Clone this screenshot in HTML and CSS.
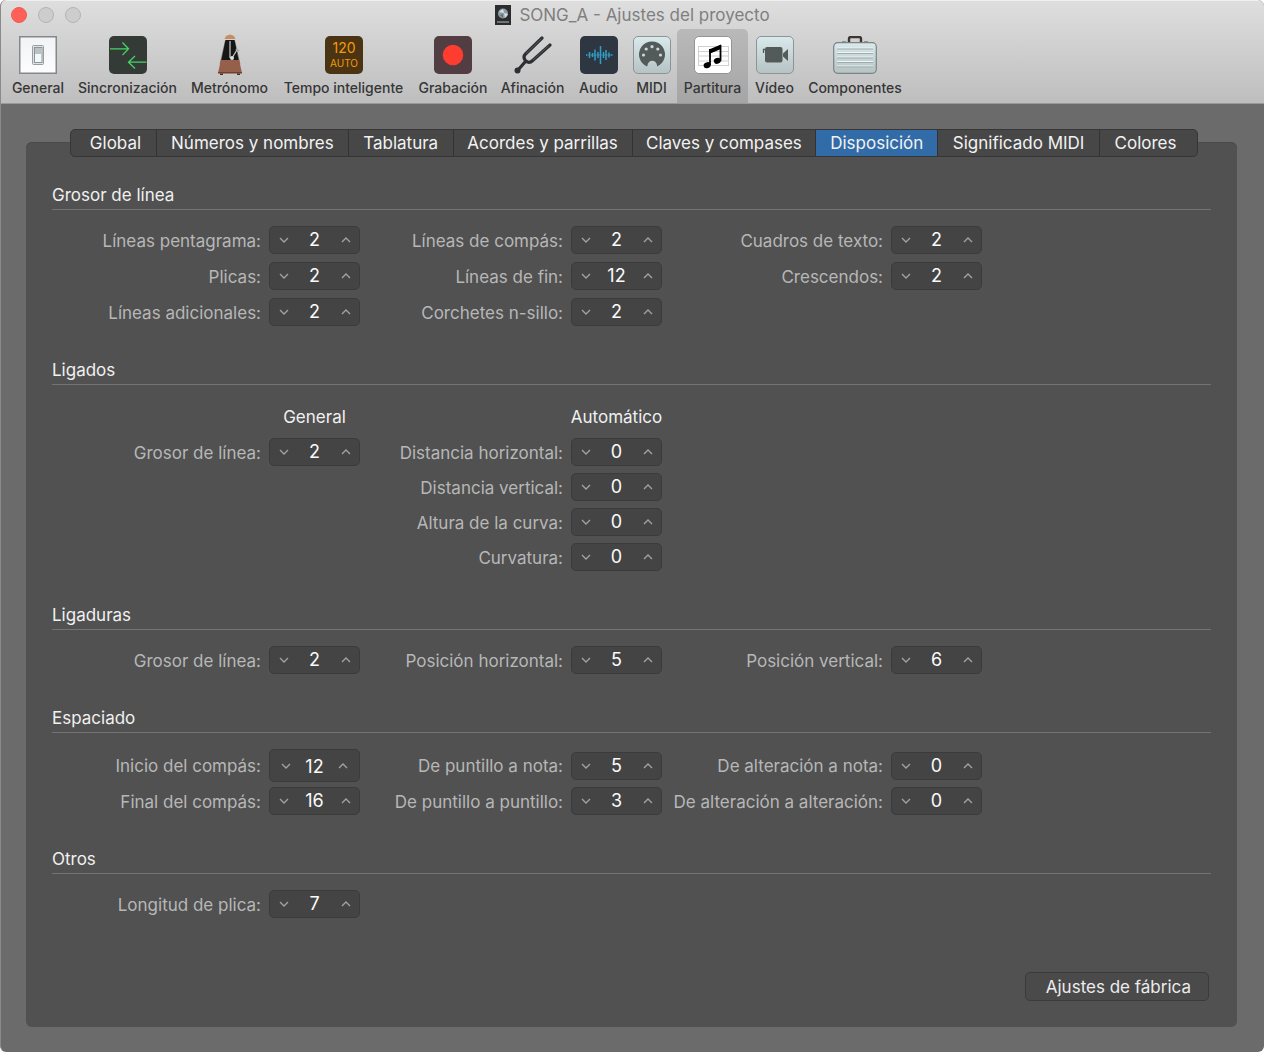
FILE: index.html
```html
<!DOCTYPE html>
<html lang="es">
<head>
<meta charset="utf-8">
<meta name="viewport" content="width=device-width, initial-scale=1">
<title>SONG_A - Ajustes del proyecto</title>
<link rel="stylesheet" href="styles.css">
</head>
<body>
<svg class="defs" aria-hidden="true">
  <symbol id="down" viewBox="0 0 10 6"><path d="M1 1l4 4 4-4"/></symbol>
  <symbol id="up" viewBox="0 0 10 6"><path d="M1 5l4-4 4 4"/></symbol>
</svg>
<div class="window">
  <header class="chrome">
    <div class="titlebar">
      <div class="lights">
        <button class="light close" aria-label="Cerrar"></button>
        <button class="light" aria-label="Minimizar"></button>
        <button class="light" aria-label="Ampliar"></button>
      </div>
      <h1 class="title">
        <svg width="16" height="20" viewBox="0 0 16 20" aria-hidden="true"><rect width="16" height="20" fill="#2b2c2e"/><circle cx="8" cy="8.500" r="5" fill="#8d9ba5"/><path d="M4 7l4-3 1 4zM9 8l4 1-3 4z" fill="#d5e0e6"/><path d="M5 10l3-1 0 4z" fill="#60707b"/><path d="M2 17h12" stroke="#bbb"/></svg>
        <span>SONG_A - Ajustes del proyecto</span>
      </h1>
    </div>
    <nav class="toolbar">
      <button class="tool"><svg width="38" height="38" viewBox="0 0 38 38"><defs><linearGradient id="g1" x2="0" y2="1"><stop stop-color="#f1f3f6"/><stop offset="1" stop-color="#fdfdfe"/></linearGradient><linearGradient id="g2" x2="0" y2="1"><stop stop-color="#d9eaec"/><stop offset="1" stop-color="#b6c2c3"/></linearGradient></defs><rect x=".75" y=".75" width="36.500" height="36.500" fill="url(#g1)" stroke="#85878a" stroke-width="1.500"/><rect x="13.500" y="9.500" width="11" height="19" rx="1" fill="#dfe2e4" stroke="#9a9da0"/><rect x="15.500" y="11.500" width="7.500" height="15" fill="#f4f8f9" stroke="#8d9497"/><rect x="16" y="12" width="6.500" height="6" fill="#b9c1c4"/></svg><span>General</span></button>
      <button class="tool"><svg width="38" height="38" viewBox="0 0 38 38"><rect width="38" height="38" rx="5" fill="#343b36"/><g fill="none" stroke="#45d364" stroke-width="1.300"><path d="M1 12.800h18.500M13.500 6.500l6 6.300-6 6.300M37.500 26.200H19.500M26 20l-6.500 6.200 6.500 6.300"/></g></svg><span>Sincronización</span></button>
      <button class="tool"><svg width="38" height="42" viewBox="0 0 38 42" class="metronome"><path d="M14 6.500h10l5.500 24h-21z" fill="#7d7a72"/><path d="M14.500 6h9l4.500 22h-18z" fill="#161616"/><path d="M13.500 5l1.500-3 4-1.500L23 2l1.500 3z" fill="#c98c62"/><path d="M10 26h18l3 13H7z" fill="#965f49"/><path d="M7 38h24v1.500H7z" fill="#6e4030"/><path d="M9 39.500h3v1.500H9zM26 39.500h3v1.500h-3z" fill="#4c2e24"/><path d="M19 7v17" stroke="#a8a8a8" stroke-width="1.500"/><path d="M21 24l8-13" stroke="#ccc" stroke-width="1.200"/><circle cx="21" cy="24" r="2" fill="#ddd"/><path d="M25 15l3 2" stroke="#aaa" stroke-width="2"/></svg><span>Metrónomo</span></button>
      <button class="tool"><svg width="38" height="38" viewBox="0 0 38 38"><rect width="38" height="38" rx="5" fill="#4a3413"/><text x="19" y="17" class="tempo-number">120</text><text x="19" y="31" class="tempo-mode">AUTO</text></svg><span>Tempo inteligente</span></button>
      <button class="tool"><svg width="38" height="38" viewBox="0 0 38 38"><rect width="38" height="38" rx="5" fill="#513d42"/><circle cx="19" cy="19" r="10.300" fill="#ff3c30"/></svg><span>Grabación</span></button>
      <button class="tool"><svg width="38" height="38" viewBox="0 0 38 38"><g fill="none" stroke="#2d2f32" stroke-linecap="round" stroke-linejoin="round"><path d="M28 2L11.500 18c-2 2-2 4-.3 6.300 2.300 2.700 5 2.700 7.500.2L36 9" stroke-width="3.200"/><path d="M11 26L4 34" stroke-width="3.200"/></g><circle cx="3.500" cy="34.500" r="3" fill="#2d2f32"/><path d="M27.500 2.500L12 17.500M35 9.500L19 24" stroke="#70757a" stroke-width=".6"/></svg><span>Afinación</span></button>
      <button class="tool"><svg width="38" height="38" viewBox="0 0 38 38"><rect width="38" height="38" rx="5" fill="#2e3641"/><path d="M6 19h1M9.500 16v6M12.500 17v4M15 13.500v11M18 16v6M20.500 10v18M23.500 16v6M26 14v10M29 16.500v5M31.500 18.500v1" stroke="#309ec7" stroke-width="1.500"/><path d="M6 19h27" stroke="#309ec7" stroke-width=".7"/></svg><span>Audio</span></button>
      <button class="tool"><svg width="38" height="38" viewBox="0 0 38 38"><rect x=".5" y=".5" width="37" height="37" rx="4.500" fill="url(#g2)" stroke="#8c9495"/><path d="M14 30.500a13 13 0 1 1 10 0v-1a4.500 4.500 0 0 0-9.500 0z" fill="#535b5a"/><g fill="#cbd8d9"><circle cx="10.500" cy="19" r="1.600"/><circle cx="13.200" cy="13" r="1.600"/><circle cx="19" cy="10.700" r="1.600"/><circle cx="24.800" cy="13" r="1.600"/><circle cx="27.500" cy="19" r="1.600"/></g></svg><span>MIDI</span></button>
      <button class="tool current" aria-current="page"><svg width="38" height="38" viewBox="0 0 38 38"><rect x=".5" y=".5" width="37" height="37" rx="4.500" fill="#fff" stroke="#949494"/><path d="M4 10.500h31M4 15.500h31M4 20h31M4 25h31M4 29.500h31M4.500 10v20M34.500 10v20" stroke="#d0d0d0" fill="none"/><path d="M15 13.500l12-5v4.500l-12 5z"/><path d="M16 13v16M26.500 9v16" stroke="#000" stroke-width="1.800"/><ellipse cx="13.200" cy="29.200" rx="3.600" ry="2.900" transform="rotate(-20 13.200 29.200)"/><ellipse cx="23.400" cy="24.800" rx="3.600" ry="2.900" transform="rotate(-20 23.400 24.800)"/></svg><span>Partitura</span></button>
      <button class="tool"><svg width="38" height="38" viewBox="0 0 38 38"><rect x=".5" y=".5" width="37" height="37" rx="4.500" fill="url(#g2)" stroke="#8c9495"/><rect x="9" y="11" width="17.500" height="15.500" rx="2" fill="#525a5a"/><path d="M27 17.500l5-4.500v12l-5-4.500z" fill="#525a5a"/><path d="M10 13.500H7.500V17" fill="none" stroke="#525a5a" stroke-width="1.300"/></svg><span>Vídeo</span></button>
      <button class="tool"><svg width="44" height="38" viewBox="0 0 44 38"><path d="M16 6.500V2.800c0-1 .8-1.800 1.800-1.800h8.400c1 0 1.800.8 1.800 1.800v3.700" fill="none" stroke="#3b3534" stroke-width="2.400"/><path d="M9 6h4M31 6h4" stroke="#555"/><rect x=".7" y="6.700" width="42.600" height="30.600" rx="4" fill="url(#g2)" stroke="#7b8484" stroke-width="1.200"/><path d="M4 12h36M4 16.500h36M4 21h36M4 25.500h36M4 30h36" stroke="#eef5f5"/><path d="M4 13h36M4 17.500h36M4 22h36M4 26.500h36M4 31h36" stroke="#a0acac"/></svg><span>Componentes</span></button>
    </nav>
  </header>

  <main class="panel">
    <div class="tabs" role="tablist">
      <button class="tab" role="tab">Global</button>
      <button class="tab" role="tab">Números y nombres</button>
      <button class="tab" role="tab">Tablatura</button>
      <button class="tab" role="tab">Acordes y parrillas</button>
      <button class="tab" role="tab">Claves y compases</button>
      <button class="tab selected" role="tab" aria-selected="true">Disposición</button>
      <button class="tab" role="tab">Significado MIDI</button>
      <button class="tab" role="tab">Colores</button>
    </div>

    <section class="group">
      <h2>Grosor de línea</h2>
      <div class="fields">
        <label class="c1" for="f1">Líneas pentagrama:</label>
        <div class="stepper"><button aria-label="Reducir"><svg><use href="#down"/></svg></button><input id="f1" value="2"><button aria-label="Aumentar"><svg><use href="#up"/></svg></button></div>
        <label class="c2" for="f2">Líneas de compás:</label>
        <div class="stepper"><button aria-label="Reducir"><svg><use href="#down"/></svg></button><input id="f2" value="2"><button aria-label="Aumentar"><svg><use href="#up"/></svg></button></div>
        <label class="c3" for="f3">Cuadros de texto:</label>
        <div class="stepper"><button aria-label="Reducir"><svg><use href="#down"/></svg></button><input id="f3" value="2"><button aria-label="Aumentar"><svg><use href="#up"/></svg></button></div>
        <label class="c1" for="f4">Plicas:</label>
        <div class="stepper"><button aria-label="Reducir"><svg><use href="#down"/></svg></button><input id="f4" value="2"><button aria-label="Aumentar"><svg><use href="#up"/></svg></button></div>
        <label class="c2" for="f5">Líneas de fin:</label>
        <div class="stepper"><button aria-label="Reducir"><svg><use href="#down"/></svg></button><input id="f5" value="12"><button aria-label="Aumentar"><svg><use href="#up"/></svg></button></div>
        <label class="c3" for="f6">Crescendos:</label>
        <div class="stepper"><button aria-label="Reducir"><svg><use href="#down"/></svg></button><input id="f6" value="2"><button aria-label="Aumentar"><svg><use href="#up"/></svg></button></div>
        <label class="c1" for="f7">Líneas adicionales:</label>
        <div class="stepper"><button aria-label="Reducir"><svg><use href="#down"/></svg></button><input id="f7" value="2"><button aria-label="Aumentar"><svg><use href="#up"/></svg></button></div>
        <label class="c2" for="f8">Corchetes n-sillo:</label>
        <div class="stepper"><button aria-label="Reducir"><svg><use href="#down"/></svg></button><input id="f8" value="2"><button aria-label="Aumentar"><svg><use href="#up"/></svg></button></div>
      </div>
    </section>

    <section class="group">
      <h2>Ligados</h2>
      <div class="fields headed">
        <h3 class="s1">General</h3>
        <h3 class="s2">Automático</h3>
        <label class="c1" for="f9">Grosor de línea:</label>
        <div class="stepper"><button aria-label="Reducir"><svg><use href="#down"/></svg></button><input id="f9" value="2"><button aria-label="Aumentar"><svg><use href="#up"/></svg></button></div>
        <label class="c2" for="f10">Distancia horizontal:</label>
        <div class="stepper"><button aria-label="Reducir"><svg><use href="#down"/></svg></button><input id="f10" value="0"><button aria-label="Aumentar"><svg><use href="#up"/></svg></button></div>
        <label class="c2" for="f11">Distancia vertical:</label>
        <div class="stepper"><button aria-label="Reducir"><svg><use href="#down"/></svg></button><input id="f11" value="0"><button aria-label="Aumentar"><svg><use href="#up"/></svg></button></div>
        <label class="c2" for="f12">Altura de la curva:</label>
        <div class="stepper"><button aria-label="Reducir"><svg><use href="#down"/></svg></button><input id="f12" value="0"><button aria-label="Aumentar"><svg><use href="#up"/></svg></button></div>
        <label class="c2" for="f13">Curvatura:</label>
        <div class="stepper"><button aria-label="Reducir"><svg><use href="#down"/></svg></button><input id="f13" value="0"><button aria-label="Aumentar"><svg><use href="#up"/></svg></button></div>
      </div>
    </section>

    <section class="group">
      <h2>Ligaduras</h2>
      <div class="fields">
        <label class="c1" for="f14">Grosor de línea:</label>
        <div class="stepper"><button aria-label="Reducir"><svg><use href="#down"/></svg></button><input id="f14" value="2"><button aria-label="Aumentar"><svg><use href="#up"/></svg></button></div>
        <label class="c2" for="f15">Posición horizontal:</label>
        <div class="stepper"><button aria-label="Reducir"><svg><use href="#down"/></svg></button><input id="f15" value="5"><button aria-label="Aumentar"><svg><use href="#up"/></svg></button></div>
        <label class="c3" for="f16">Posición vertical:</label>
        <div class="stepper"><button aria-label="Reducir"><svg><use href="#down"/></svg></button><input id="f16" value="6"><button aria-label="Aumentar"><svg><use href="#up"/></svg></button></div>
      </div>
    </section>

    <section class="group">
      <h2>Espaciado</h2>
      <div class="fields tight">
        <label class="c1" for="f17">Inicio del compás:</label>
        <div class="stepper tall"><button aria-label="Reducir"><svg><use href="#down"/></svg></button><input id="f17" value="12"><button aria-label="Aumentar"><svg><use href="#up"/></svg></button></div>
        <label class="c2" for="f18">De puntillo a nota:</label>
        <div class="stepper"><button aria-label="Reducir"><svg><use href="#down"/></svg></button><input id="f18" value="5"><button aria-label="Aumentar"><svg><use href="#up"/></svg></button></div>
        <label class="c3" for="f19">De alteración a nota:</label>
        <div class="stepper"><button aria-label="Reducir"><svg><use href="#down"/></svg></button><input id="f19" value="0"><button aria-label="Aumentar"><svg><use href="#up"/></svg></button></div>
        <label class="c1" for="f20">Final del compás:</label>
        <div class="stepper"><button aria-label="Reducir"><svg><use href="#down"/></svg></button><input id="f20" value="16"><button aria-label="Aumentar"><svg><use href="#up"/></svg></button></div>
        <label class="c2" for="f21">De puntillo a puntillo:</label>
        <div class="stepper"><button aria-label="Reducir"><svg><use href="#down"/></svg></button><input id="f21" value="3"><button aria-label="Aumentar"><svg><use href="#up"/></svg></button></div>
        <label class="c3" for="f22">De alteración a alteración:</label>
        <div class="stepper"><button aria-label="Reducir"><svg><use href="#down"/></svg></button><input id="f22" value="0"><button aria-label="Aumentar"><svg><use href="#up"/></svg></button></div>
      </div>
    </section>

    <section class="group">
      <h2>Otros</h2>
      <div class="fields">
        <label class="c1" for="f23">Longitud de plica:</label>
        <div class="stepper"><button aria-label="Reducir"><svg><use href="#down"/></svg></button><input id="f23" value="7"><button aria-label="Aumentar"><svg><use href="#up"/></svg></button></div>
      </div>
    </section>

    <div class="actions"><button class="reset">Ajustes de fábrica</button></div>
  </main>
</div>
</body>
</html>
```
FILE: styles.css
```css
* { box-sizing: border-box; }

body {
  margin: 0;
  padding: 0 2px 1px 0;
  background: #fff;
  font: 17px/20px Inter, "Liberation Sans", sans-serif;
}

button, input { font: inherit; color: inherit; }
button { margin: 0; padding: 0; border: 0; background: none; }

.defs { display: block; width: 0; height: 0; }

.window {
  display: flex;
  flex-direction: column;
  min-height: calc(100vh - 1px);
  border-left: 1px solid #8a8a8a;
  border-radius: 6px;
  background: #6b6b6b;
  overflow: hidden;
}

/* Title bar and toolbar */
.chrome {
  border-top: 1px solid #efefef;
  border-bottom: 1px solid #999;
  background: linear-gradient(#dedede, #bebebe);
}

.titlebar {
  display: grid;
  grid-template-columns: 1fr auto 1fr;
  align-items: center;
  height: 28px;
}

.lights { display: flex; gap: 11px; padding-left: 10px; }

.light {
  width: 16px;
  height: 16px;
  border: 1px solid #b4b4b4;
  border-radius: 50%;
  background: #cdcdcd;
}

.light.close { border-color: #ee5a52; background: #ff6058; }

.title {
  display: flex;
  align-items: center;
  gap: 8px;
  margin: 0;
  color: #7f7f7f;
  font-size: 17px;
  font-weight: 400;
}

.toolbar {
  display: grid;
  grid-template-columns: 66px 113px 91px 137px 82px 77px 55px 51px 71px 53px 108px;
  padding-left: 4px;
}

.tool {
  display: flex;
  flex-direction: column;
  align-items: center;
  gap: 4px;
  height: 74px;
  padding-top: 7px;
  color: #363636;
  font-size: 14px;
  font-weight: 500;
  white-space: nowrap;
}

.tool.current { border-radius: 5px 5px 0 0; background: rgba(0, 0, 0, .13); }
.metronome { margin: -2px 0; }

.tempo-number, .tempo-mode { fill: #f39a09; text-anchor: middle; font-weight: 400; }
.tempo-number { font-size: 14px; }
.tempo-mode { font-size: 10px; }

/* Settings panel */
.panel {
  display: flex;
  flex: 1;
  flex-direction: column;
  margin: 38px 27px 25px 25px;
  padding: 0 26px 26px;
  border-radius: 6px;
  background: #515151;
  box-shadow: inset 0 1px #4a4a4a;
}

.tabs {
  display: grid;
  grid-template-columns: 86fr 192fr 105fr 179fr 184fr 122fr 162fr 97fr;
  margin: -13px 13px 28px 18px;
  border: 1px solid #363636;
  border-radius: 5px;
  background: #474747;
  overflow: hidden;
}

.tab {
  height: 26px;
  border-right: 1px solid #333;
  color: #f2f2f2;
  white-space: nowrap;
}

.tab:first-child { padding-left: 4px; }
.tab:last-child { border-right: 0; padding-right: 6px; }
.tab.selected { background: #326ca8; }

.group { margin-bottom: 34px; }

h2, h3 { margin: 0; color: #f0f0f0; font-size: 17px; font-weight: 400; }
h2 { padding-bottom: 4px; border-bottom: 1px solid #737373; }
h3 { padding: 6px 0 4px; justify-self: center; }

.fields {
  display: grid;
  grid-template-columns: 209px 91px 195px 91px 213px 91px;
  gap: 8px;
  align-items: center;
  padding-top: 16px;
}

.fields.headed { row-gap: 7px; }
.fields.tight { row-gap: 5px; }

label { padding-top: 1px; color: #b7b7b7; text-align: right; white-space: nowrap; }

.c1 { grid-column: 1; }
.s1 { grid-column: 2; }
.c2 { grid-column: 3; }
.s2 { grid-column: 4; }
.c3 { grid-column: 5; }

.stepper {
  display: flex;
  height: 28px;
  border: 1px solid #3b3b3b;
  border-radius: 5px;
  background: #444;
}

.stepper button { display: grid; place-items: center; width: 27px; }
.stepper svg { width: 10px; height: 6px; fill: none; stroke: #a3a3a3; stroke-width: 1.3; }

.stepper input {
  flex: 1;
  width: 0;
  min-width: 0;
  padding: 0;
  border: 0;
  outline: 0;
  background: none;
  color: #fafafa;
  font-size: 18px;
  text-align: center;
}

.stepper.tall { height: 33px; }
.stepper.tall button { width: 32px; }
.stepper.tall input { padding-top: 3px; }

.actions { display: flex; justify-content: flex-end; margin-top: auto; }

.reset {
  height: 29px;
  margin-right: 2px;
  padding: 0 17px 0 20px;
  border: 1px solid #3b3b3b;
  border-radius: 5px;
  background: #4a4a4a;
  color: #ececec;
}
```
